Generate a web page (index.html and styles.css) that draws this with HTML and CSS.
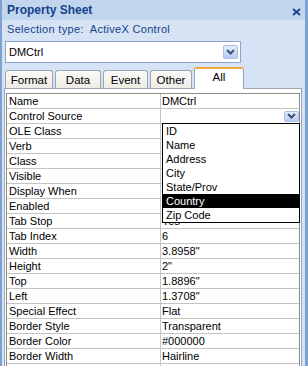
FILE: index.html
```html
<!DOCTYPE html>
<html lang="en">
<head>
    <meta charset="UTF-8">
    <title>Property Sheet</title>
    <link rel="stylesheet" href="styles.css">
</head>
<body>

<div class="window">
    <div class="titlebar">
        <span>Property Sheet</span>
        <svg class="close" width="9" height="8" viewBox="0 0 9 8"><path d="M1 1 L8 7 M8 1 L1 7" stroke="#15428b" stroke-width="1.8" fill="none"/></svg>
    </div>
    <div class="seltype">Selection type:&nbsp; ActiveX Control</div>

    <div class="combo">
        <span>DMCtrl</span>
        <span class="drop-btn big"><svg width="9" height="6" viewBox="0 0 9 6"><path d="M1 1 L4.5 4.5 L8 1" stroke="#3d4f73" stroke-width="2" fill="none"/></svg></span>
    </div>

    <!-- Tabs -->
    <div class="tabs">
        <div class="tab" style="width: 48px">Format</div>
        <div class="tab" style="width: 46px">Data</div>
        <div class="tab" style="width: 45px">Event</div>
        <div class="tab" style="width: 42px">Other</div>
        <div class="tab active" style="width: 50px">All</div>
    </div>

    <div class="panel">
        <div class="grid">
            <div class="row"><div class="name">Name</div><div class="value">DMCtrl</div></div>
            <div class="row"><div class="name">Control Source</div><div class="value"><span class="drop-btn small"><svg width="9" height="6" viewBox="0 0 9 6"><path d="M1 1 L4.5 4.5 L8 1" stroke="#3d4f73" stroke-width="2" fill="none"/></svg></span></div></div>
            <div class="row"><div class="name">OLE Class</div><div class="value"></div></div>
            <div class="row"><div class="name">Verb</div><div class="value"></div></div>
            <div class="row"><div class="name">Class</div><div class="value"></div></div>
            <div class="row"><div class="name">Visible</div><div class="value"></div></div>
            <div class="row"><div class="name">Display When</div><div class="value"></div></div>
            <div class="row"><div class="name">Enabled</div><div class="value"></div></div>
            <div class="row"><div class="name">Tab Stop</div><div class="value">Yes</div></div>
            <div class="row"><div class="name">Tab Index</div><div class="value">6</div></div>
            <div class="row"><div class="name">Width</div><div class="value">3.8958"</div></div>
            <div class="row"><div class="name">Height</div><div class="value">2"</div></div>
            <div class="row"><div class="name">Top</div><div class="value">1.8896"</div></div>
            <div class="row"><div class="name">Left</div><div class="value">1.3708"</div></div>
            <div class="row"><div class="name">Special Effect</div><div class="value">Flat</div></div>
            <div class="row"><div class="name">Border Style</div><div class="value">Transparent</div></div>
            <div class="row"><div class="name">Border Color</div><div class="value">#000000</div></div>
            <div class="row"><div class="name">Border Width</div><div class="value">Hairline</div></div>
            <div class="row"><div class="name"></div><div class="value"></div></div>
        </div>

        <!-- open list of the Control Source field -->
        <ul class="list">
            <li>ID</li>
            <li>Name</li>
            <li>Address</li>
            <li>City</li>
            <li>State/Prov</li>
            <li class="selected">Country</li>
            <li>Zip Code</li>
        </ul>
    </div>
</div>

</body>
</html>
```

FILE: styles.css
```css
body {
    margin: 0;
    font-family: "Liberation Sans", Arial, sans-serif;
    font-size: 11px;
    color: #000;
}
.window {
    width: 308px;
    height: 366px;
    box-sizing: border-box;
    border-left: 2px solid #7fa1cf;
    border-right: 3px solid #7fa1cf;
    background-color: #d5e3f4;
    overflow: hidden;
}
.titlebar {
    height: 20px;
    background-color: #c1d5ee;
    display: flex;
    justify-content: space-between;
    align-items: center;
    padding: 0 4px 0 5px;
    font-size: 12px;
    font-weight: bold;
    color: #15428b;
}
.close {
    margin-top: 4px;
}
.seltype {
    height: 18px;
    line-height: 18px;
    padding-left: 5px;
    color: #15428b;
    letter-spacing: 0.3px;
}
.combo {
    margin: 3px 0 0 3px;
    width: 236px;
    height: 22px;
    box-sizing: border-box;
    border: 1px solid #8aa5c9;
    background-color: #fff;
    display: flex;
    justify-content: space-between;
    align-items: center;
    padding: 0 2px 0 3px;
}
.drop-btn {
    display: flex;
    align-items: center;
    justify-content: center;
    box-sizing: border-box;
    border: 1px solid #a8bfe6;
    border-radius: 2px;
    background: linear-gradient(#e3edfd, #b7cbf1);
}
.drop-btn.big {
    width: 15px;
    height: 14px;
}
.drop-btn.small {
    width: 15px;
    height: 11px;
    margin-left: auto;
}
/* Tabs */
.tabs {
    display: flex;
    gap: 2px;
    height: 22px;
    margin: 4px 0 -1px 3px;
    position: relative;
    z-index: 1;
}
.tab {
    height: 18px;
    margin-top: 3px;
    box-sizing: border-box;
    border: 1px solid #9ba6b4;
    border-bottom: none;
    border-radius: 3px 3px 0 0;
    background: linear-gradient(#fbfaf7, #ecebe4);
    text-align: center;
    line-height: 18px;
    font-size: 11.5px;
}
.tab.active {
    height: 22px;
    margin-top: 0;
    border-top: 2px solid #f2a93b;
    background: #fff;
    line-height: 17px;
}
.panel {
    position: relative;
    margin-left: 2px;
    width: 298px;
    height: 300px;
    box-sizing: border-box;
    border: 1px solid #9ba6b4;
    background-color: #fff;
    padding: 4px 1px 0 1px;
}
.grid {
    border: 1px solid #8c8c8c;
    border-bottom: none;
}
.row {
    display: flex;
    height: 15px;
    box-sizing: border-box;
    border-bottom: 1px solid #c4c4c4;
    line-height: 14px;
}
.name {
    width: 154px;
    box-sizing: border-box;
    border-right: 1px solid #c4c4c4;
    padding-left: 2px;
}
.value {
    flex: 1;
    display: flex;
    align-items: center;
    padding-left: 1px;
}
.list {
    position: absolute;
    left: 157px;
    top: 34px;
    width: 138px;
    margin: 0;
    padding: 0;
    list-style: none;
    box-sizing: border-box;
    border: 1px solid #000;
    background-color: #fff;
}
.list li {
    height: 14px;
    line-height: 14px;
    padding-left: 3px;
}
.list li.selected {
    background-color: #000;
    color: #fff;
}
```
